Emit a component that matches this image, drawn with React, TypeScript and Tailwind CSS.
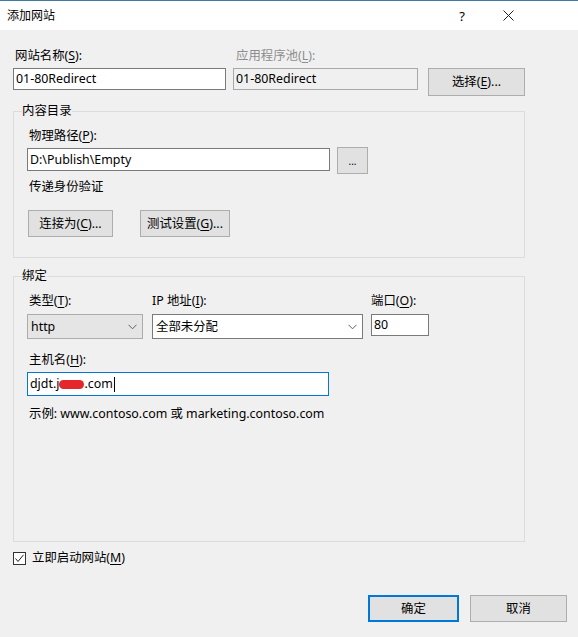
import React from 'react';

const FONT = '"Noto Sans", "Noto Sans CJK SC", sans-serif';

// mnemonic letter, underlined like a Win32 access key
const U: React.FC<{ children: React.ReactNode }> = ({ children }) => (
    <span className="underline underline-offset-2">{children}</span>
);

const Chevron: React.FC = () => (
    <svg width="9" height="6" viewBox="0 0 9 6" className="shrink-0">
        <path d="M0.5 0.8 L4.5 4.8 L8.5 0.8" fill="none" stroke="#5f5f5f" strokeWidth="1" />
    </svg>
);

const WinButton: React.FC<{ className?: string; children: React.ReactNode }> = ({ className = '', children }) => (
    <div className={`flex items-center justify-center bg-[#e1e1e1] border border-[#adadad] text-black ${className}`}>
        {children}
    </div>
);

const App: React.FC = () => {
    return (
        <div
            className="w-[578px] h-[637px] bg-[#f0f0f0] text-[12.4px] leading-[16px] text-black flex flex-col overflow-hidden"
            style={{ fontFamily: FONT }}
        >
            {/* title bar */}
            <div className="h-[30px] shrink-0 bg-white border-t border-[#3f7aa6] flex items-center pl-[7px]">
                <span className="text-[12px]">添加网站</span>
                <span className="ml-auto mr-[38px] text-[13px]">?</span>
                <svg width="11" height="11" viewBox="0 0 11 11" className="mr-[64px]">
                    <path d="M0.5 0.5 L10.5 10.5 M10.5 0.5 L0.5 10.5" stroke="#222" strokeWidth="1" />
                </svg>
            </div>

            <div className="flex-1 flex flex-col pl-[13px] pr-[11px]">
                {/* site name / app pool */}
                <div className="mt-[18px] flex">
                    <div className="w-[213px] pl-[2px]">网站名称(<U>S</U>):</div>
                    <div className="ml-[7px] w-[185px] pl-[3px] text-[#8d8d8d]">应用程序池(<U>L</U>):</div>
                </div>
                <div className="mt-[4px] flex items-start">
                    <div className="w-[213px] h-[22px] bg-white border border-[#7a7a7a] flex items-center pl-[2px]">
                        01-80Redirect
                    </div>
                    <div className="ml-[7px] w-[185px] h-[22px] bg-[#f0f0f0] border border-[#a8a8a8] flex items-center pl-[2px]">
                        01-80Redirect
                    </div>
                    <WinButton className="ml-[10px] w-[97px] h-[28px]">
                        选择(<U>E</U>)...
                    </WinButton>
                </div>

                {/* content directory */}
                <fieldset className="mt-[7px] w-[512px] border border-[#dcdcdc] px-[13px] pb-[20px]">
                    <legend className="-ml-[5px] px-0">内容目录</legend>
                    <div className="mt-[9px] pl-[2px]">物理路径(<U>P</U>):</div>
                    <div className="mt-[4px] flex items-start">
                        <div className="w-[303px] h-[23px] bg-white border border-[#7a7a7a] flex items-center pl-[2px]">
                            D:\Publish\Empty
                        </div>
                        <WinButton className="ml-[7px] -mt-[1px] w-[31px] h-[27px] text-[10px]">...</WinButton>
                    </div>
                    <div className="mt-[5px] pl-[2px]">传递身份验证</div>
                    <div className="mt-[15px] flex">
                        <WinButton className="ml-[1px] w-[85px] h-[27px]">
                            连接为(<U>C</U>)...
                        </WinButton>
                        <WinButton className="ml-[27px] w-[90px] h-[27px]">
                            测试设置(<U>G</U>)...
                        </WinButton>
                    </div>
                </fieldset>

                {/* bindings */}
                <fieldset className="mt-[10px] w-[512px] border border-[#dcdcdc] px-[13px] pb-[119px]">
                    <legend className="-ml-[5px] px-0">绑定</legend>
                    <div className="mt-[9px] flex items-start">
                        <div className="w-[116px]">
                            <div className="pl-[2px]">类型(<U>T</U>):</div>
                            <div className="mt-[5px] h-[25px] bg-[#e5e5e5] border border-[#acacac] flex items-center pl-[3px] pr-[5px]">
                                <span className="flex-1">http</span>
                                <Chevron />
                            </div>
                        </div>
                        <div className="ml-[9px] w-[211px]">
                            <div>IP 地址(<U>I</U>):</div>
                            <div className="mt-[5px] h-[25px] bg-white border border-[#7a7a7a] flex items-center pl-[3px] pr-[5px]">
                                <span className="flex-1">全部未分配</span>
                                <Chevron />
                            </div>
                        </div>
                        <div className="ml-[8px] w-[58px]">
                            <div>端口(<U>O</U>):</div>
                            <div className="mt-[5px] h-[22px] bg-white border border-[#7a7a7a] flex items-center pl-[2px]">
                                80
                            </div>
                        </div>
                    </div>
                    <div className="mt-[13px] pl-[2px]">主机名(<U>H</U>):</div>
                    <div className="mt-[4px] w-[302px] h-[24px] bg-white border border-[#0078d7] flex items-center pl-[2px]">
                        <span>djdt.j</span>
                        <span className="inline-block w-[25px] h-[9px] rounded-full bg-[#e5262b]" />
                        <span>.com</span>
                        <span className="inline-block w-px h-[15px] bg-black ml-[1px]" />
                    </div>
                    <div className="mt-[10px] pl-[2px]">示例: www.contoso.com 或 marketing.contoso.com</div>
                </fieldset>

                {/* start immediately */}
                <div className="mt-[8px] flex items-center">
                    <div className="w-[13px] h-[13px] bg-white border border-[#333333] flex items-center justify-center">
                        <svg width="11" height="11" viewBox="0 0 11 11">
                            <path d="M1.5 5.5 L4 8.5 L9.5 1.8" fill="none" stroke="#222" strokeWidth="1" />
                        </svg>
                    </div>
                    <span className="ml-[6px]">立即启动网站(<U>M</U>)</span>
                </div>

                {/* dialog buttons */}
                <div className="mt-[29px] flex justify-end">
                    <div className="w-[91px] h-[27px] bg-[#e1e1e1] border-2 border-[#0078d7] flex items-center justify-center">
                        确定
                    </div>
                    <WinButton className="ml-[11px] w-[97px] h-[27px]">取消</WinButton>
                </div>
            </div>
        </div>
    );
};

export default App;
